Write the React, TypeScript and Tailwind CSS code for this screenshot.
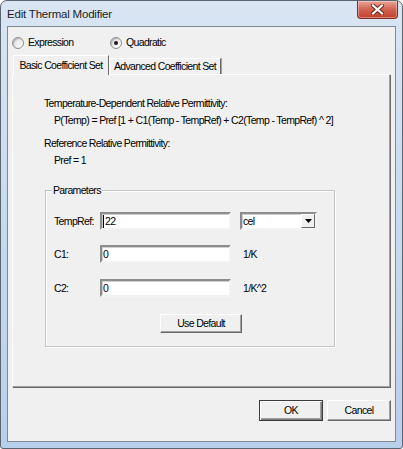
import type { ReactNode } from 'react'

const FONT = "font-['Liberation_Sans',Arial,sans-serif]"
const TXT = 'text-[10.5px] leading-[13px] tracking-[-0.65px] whitespace-nowrap'

function Radio({ checked, label }: { checked?: boolean; label: string }) {
  return (
    <div className="flex items-center">
      <span className="flex h-[12px] w-[12px] items-center justify-center rounded-full border border-[#8e8f8f] bg-gradient-to-br from-[#dcdcdc] to-white shadow-[inset_1px_1px_1px_#b5b5b5]">
        {checked && <span className="h-[4px] w-[4px] rounded-full bg-[#1a1a1a]" />}
      </span>
      <span className={`ml-[4px] ${TXT}`}>{label}</span>
    </div>
  )
}

function Field({ children, width }: { children?: ReactNode; width: string }) {
  return (
    <div
      className={`flex h-[18px] items-center border-2 border-t-[#8c8c8c] border-l-[#8c8c8c] border-r-[#f3f3f3] border-b-[#f3f3f3] bg-white pl-[1px] shadow-[inset_1px_1px_0_#d0d0d0] ${TXT} ${width}`}
    >
      {children}
    </div>
  )
}

function Button({ label, isDefault, className }: { label: string; isDefault?: boolean; className: string }) {
  return (
    <button
      className={`flex items-center justify-center bg-[#f0f0f0] ${TXT} ${
        isDefault
          ? 'border border-[#3c3c3c] shadow-[inset_1px_1px_0_#fff,inset_-1px_-1px_0_#7a7a7a,inset_-2px_-2px_0_#a0a0a0]'
          : 'border border-t-white border-l-white border-r-[#696969] border-b-[#696969] shadow-[inset_-1px_-1px_0_#a0a0a0]'
      } ${className}`}
    >
      {label}
    </button>
  )
}

export default function App() {
  return (
    <div className={`h-[449px] w-[403px] bg-white text-black ${FONT}`}>
      <div className="flex h-full w-full flex-col rounded-t-[7px] rounded-b-[3px] border border-[#5a6571] bg-gradient-to-b from-[#d9e5f3] via-[#c8daf0] to-[#b8cfec]">
        {/* Title bar */}
        <div className="flex h-[25px] items-start justify-between pl-[6px] pr-[4px]">
          <span className="mt-[5px] text-[11.5px] leading-[16px] tracking-[-0.2px] text-[#1e1e1e]">
            Edit Thermal Modifier
          </span>
          <div className="flex h-[18px] w-[41px] items-center justify-center rounded-b-[4px] border border-t-0 border-[#7d2e22] bg-gradient-to-b from-[#e9a596] via-[#d0624f] to-[#c0402c] shadow-[inset_0_0_0_1px_rgba(255,255,255,0.35)]">
            <svg width="13" height="11" viewBox="0 0 13 11">
              <path d="M2 1.5 L11 9.5 M11 1.5 L2 9.5" stroke="#6a2318" strokeWidth="4" strokeLinecap="square" />
              <path d="M2 1.5 L11 9.5 M11 1.5 L2 9.5" stroke="#ffffff" strokeWidth="2.2" strokeLinecap="square" />
            </svg>
          </div>
        </div>

        {/* Client area */}
        <div className="flex-1 px-[6px] pb-[6px]">
          <div className="flex h-full flex-col border border-[#7d8b99] bg-[#f0f0f0]">
            {/* Radios */}
            <div className="flex pl-[4px] pt-[9px]">
              <div className="w-[98px]">
                <Radio label="Expression" />
              </div>
              <Radio checked label="Quadratic" />
            </div>

            {/* Tabs */}
            <div className="mt-[6px] flex h-[19px] items-end pl-[5px]">
              <div className={`relative z-10 -mb-px flex h-[20px] w-[96px] items-center justify-center border border-b-0 border-t-white border-l-white border-r-[#696969] bg-[#f0f0f0] ${TXT}`}>
                Basic Coefficient Set
              </div>
              <div className={`flex h-[16px] w-[112px] items-center justify-center border border-b-0 border-t-white border-l-white border-r-[#696969] shadow-[1px_0_0_#a0a0a0] ${TXT}`}>
                Advanced Coefficient Set
              </div>
            </div>

            {/* Tab pane */}
            <div className="ml-[4px] flex h-[313px] w-[378px] flex-col border border-t-white border-l-white border-r-[#a0a0a0] border-b-[#a0a0a0] pl-[31px] pt-[22px] shadow-[1px_1px_0_#696969]">
              <p className={TXT}>Temperature-Dependent Relative Permittivity:</p>
              <p className={`mt-[4px] pl-[10px] ${TXT}`}>
                P(Temp) = Pref [1 + C1(Temp - TempRef) + C2(Temp - TempRef) ^ 2]
              </p>
              <p className={`mt-[10px] ${TXT}`}>Reference Relative Permittivity:</p>
              <p className={`mt-[4px] pl-[10px] ${TXT}`}>Pref = 1</p>

              {/* Parameters group */}
              <div className="relative ml-px mt-[23px] h-[157px] w-[290px] border border-[#c4c4c4] pl-[8px] pt-[21px] shadow-[inset_1px_1px_0_#fff,1px_1px_0_#fff]">
                <span className={`absolute -top-[7px] left-[6px] bg-[#f0f0f0] px-px ${TXT}`}>Parameters</span>

                <div className="flex items-center">
                  <span className={`w-[46px] ${TXT}`}>TempRef:</span>
                  <Field width="w-[131px]">
                    <span className="h-[13px] w-px bg-black" />
                    <span className="ml-px">22</span>
                  </Field>
                  <div className="ml-[9px] flex h-[18px] w-[77px] items-center border-2 border-t-[#8c8c8c] border-l-[#8c8c8c] border-r-[#f3f3f3] border-b-[#f3f3f3] bg-white shadow-[inset_1px_1px_0_#d0d0d0]">
                    <span className={`flex-1 pl-[1px] ${TXT}`}>cel</span>
                    <span className="flex h-[14px] w-[14px] items-center justify-center border border-t-white border-l-white border-r-[#696969] border-b-[#696969] bg-[#f0f0f0]">
                      <svg width="7" height="4" viewBox="0 0 7 4">
                        <path d="M0 0 H7 L3.5 4 Z" fill="#000" />
                      </svg>
                    </span>
                  </div>
                </div>

                <div className="mt-[15px] flex items-center">
                  <span className={`w-[46px] ${TXT}`}>C1:</span>
                  <Field width="w-[131px]">0</Field>
                  <span className={`ml-[12px] ${TXT}`}>1/K</span>
                </div>

                <div className="mt-[16px] flex items-center">
                  <span className={`w-[46px] ${TXT}`}>C2:</span>
                  <Field width="w-[131px]">0</Field>
                  <span className={`ml-[12px] ${TXT}`}>1/K^2</span>
                </div>

                <Button label="Use Default" className="ml-[106px] mt-[17px] h-[19px] w-[82px]" />
              </div>
            </div>

            {/* Dialog buttons */}
            <div className="mt-[13px] flex justify-end gap-[4px] pr-[4px]">
              <Button label="OK" isDefault className="h-[21px] w-[64px]" />
              <Button label="Cancel" className="h-[21px] w-[64px]" />
            </div>
          </div>
        </div>
      </div>
    </div>
  )
}
